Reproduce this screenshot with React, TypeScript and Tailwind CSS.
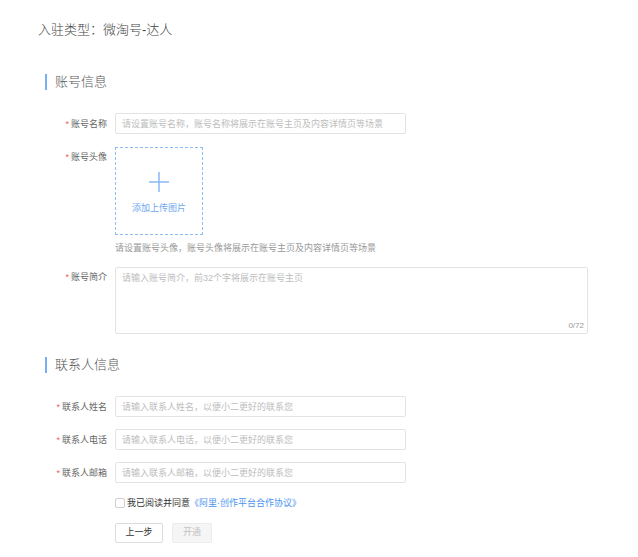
import React from 'react';

const font = 'font-["Liberation_Sans","Noto_Sans_CJK_SC",sans-serif]';

function Label({ text }: { text: string }) {
  return (
    <div className="w-[70px] shrink-0 pr-[8px] h-[20px] leading-[20px] text-right text-[9px] text-[#666]">
      <span className="text-[#f25c5c] mr-[2px] text-[9px]">*</span>
      {text}
    </div>
  );
}

function SectionHead({ title }: { title: string }) {
  return (
    <div className="flex items-center h-[16px]">
      <div className="w-[2px] h-[16px] bg-[#78aef5]" />
      <div className="ml-[8px] text-[13px] leading-[16px] text-[#555] font-light">{title}</div>
    </div>
  );
}

function TextInput({ label, placeholder }: { label: string; placeholder: string }) {
  return (
    <div className="flex items-center">
      <Label text={label} />
      <input
        placeholder={placeholder}
        className="w-[291px] h-[21px] border border-[#e3e3e3] rounded-[2px] px-[6px] text-[9px] text-[#333] outline-none placeholder:text-[#bdbdbd]"
      />
    </div>
  );
}

export default function App() {
  return (
    <div className={`min-h-screen bg-white pl-[38px] pt-[23px] ${font}`}>
      <div className="text-[13px] leading-[14px] text-[#444] font-light">入驻类型：微淘号-达人</div>

      <div className="ml-[7px]">
        <div className="mt-[37px]">
          <SectionHead title="账号信息" />
        </div>

        <div className="mt-[23px]">
          <TextInput label="账号名称" placeholder="请设置账号名称，账号名称将展示在账号主页及内容详情页等场景" />
        </div>

        <div className="mt-[13px] flex items-start">
          <Label text="账号头像" />
          <div>
            <div className="w-[88px] h-[88px] border border-dashed border-[#8dbcf5] flex flex-col items-center">
              <svg width="20" height="20" viewBox="0 0 20 20" className="mt-[24px]">
                <path d="M10 0V20M0 10H20" stroke="#8ab8f3" strokeWidth="1.5" fill="none" />
              </svg>
              <div className="mt-[10px] text-[9px] leading-[12px] text-[#6ea7f0]">添加上传图片</div>
            </div>
            <div className="mt-[7px] text-[9px] leading-[12px] text-[#999]">
              请设置账号头像，账号头像将展示在账号主页及内容详情页等场景
            </div>
          </div>
        </div>

        <div className="mt-[13px] flex items-start">
          <Label text="账号简介" />
          <div className="relative">
            <textarea
              placeholder="请输入账号简介，前32个字将展示在账号主页"
              className="block w-[473px] h-[67px] resize-none border border-[#e3e3e3] rounded-[2px] px-[6px] py-[4px] text-[9px] leading-[12px] text-[#333] outline-none placeholder:text-[#bdbdbd]"
            />
            <span className="absolute right-[4px] bottom-[2px] text-[8px] leading-[12px] text-[#999]">0/72</span>
          </div>
        </div>

        <div className="mt-[23px]">
          <SectionHead title="联系人信息" />
        </div>

        <div className="mt-[23px] flex flex-col gap-[12px]">
          <TextInput label="联系人姓名" placeholder="请输入联系人姓名，以便小二更好的联系您" />
          <TextInput label="联系人电话" placeholder="请输入联系人电话，以便小二更好的联系您" />
          <TextInput label="联系人邮箱" placeholder="请输入联系人邮箱，以便小二更好的联系您" />
        </div>

        <div className="mt-[15px] ml-[70px] flex items-center h-[10px]">
          <span className="w-[10px] h-[10px] border border-[#cfcfcf] rounded-[2px] bg-white" />
          <span className="ml-[2px] text-[9px] leading-[12px] text-[#333]">我已阅读并同意</span>
          <span className="text-[9px] leading-[12px] text-[#4d94ef]">《阿里·创作平台合作协议》</span>
        </div>

        <div className="mt-[15px] ml-[70px] flex gap-[9px]">
          <button className="w-[48px] h-[20px] border border-[#dcdcdc] rounded-[2px] bg-white text-[9px] text-[#333]">
            上一步
          </button>
          <button className="w-[40px] h-[20px] border border-[#ececec] rounded-[2px] bg-[#f5f5f5] text-[9px] text-[#c4c4c4]">
            开通
          </button>
        </div>
      </div>
    </div>
  );
}
